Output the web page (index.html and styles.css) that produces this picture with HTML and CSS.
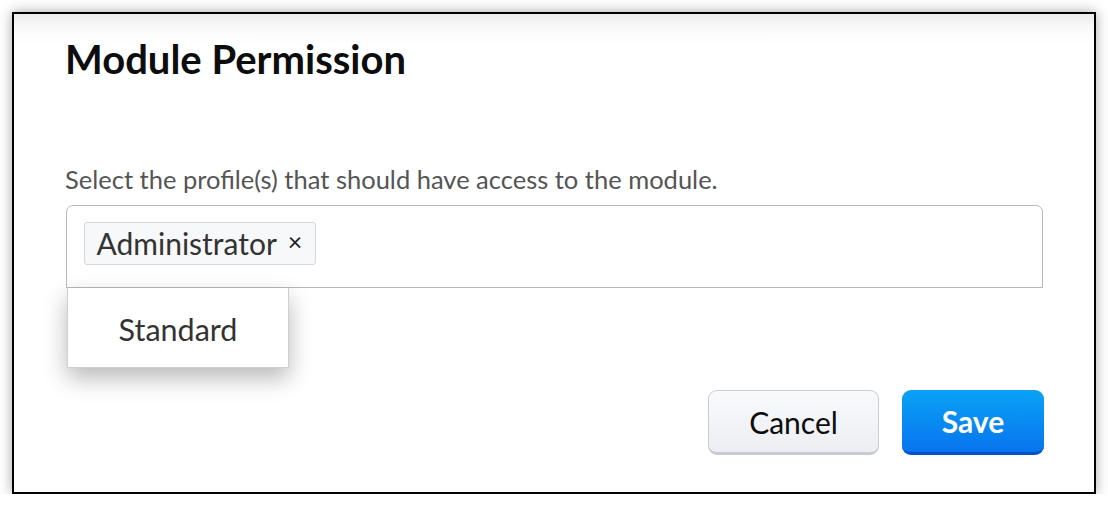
FILE: index.html
```html
<!DOCTYPE html>
<html>
<head>
<meta charset="utf-8">
<link rel="stylesheet" href="styles.css">
</head>
<body>
<div class="frame">
  <h1 class="title">Module Permission</h1>
  <p class="label">Select the profile(s) that should have access to the module.</p>
  <div class="field">
    <div class="input">
      <span class="tag">Administrator<span class="tag-x">×</span></span>
    </div>
    <div class="dropdown">
      <div class="option">Standard</div>
    </div>
  </div>
  <div class="actions">
    <button class="btn btn-cancel">Cancel</button>
    <button class="btn btn-save">Save</button>
  </div>
</div>
</body>
</html>
```

FILE: styles.css
```css
html, body {
  margin: 0;
  padding: 0;
  background: #fff;
}
body {
  padding: 12px 0 0 12px;
  font-family: Lato, "Liberation Sans", sans-serif;
}
.frame {
  box-sizing: border-box;
  width: 1084px;
  height: 482px;
  border: 2px solid #000;
  background: linear-gradient(#ececec 0px, #fafafa 14px, #fff 30px);
  box-shadow: 0 0 12px rgba(0,0,0,0.35);
  padding: 0 51px 0 52px;
  display: flex;
  flex-direction: column;
}
.title {
  margin: 21px 0 0 -1px;
  font-size: 40px;
  font-weight: 700;
  line-height: 48px;
  color: #0d0d0d;
}
.label {
  margin: 81px 0 0 -1px;
  font-size: 25.5px;
  line-height: 30px;
  color: #555;
}
.field {
  position: relative;
  margin-top: 11px;
}
.input {
  box-sizing: border-box;
  height: 83px;
  border: 1.5px solid #b8b9c0;
  border-radius: 7px 7px 0 0;
  padding: 15.5px 0 0 16.5px;
  background: #fff;
}
.tag {
  display: inline-flex;
  align-items: center;
  box-sizing: border-box;
  height: 43px;
  padding: 0 13px 0 12px;
  border: 1px solid #d6d7db;
  border-radius: 3px;
  background: #f7f8fa;
  font-size: 30px;
  line-height: 41px;
  color: #333;
}
.tag-x {
  font-size: 25px;
  margin-left: 11px;
  position: relative;
  top: -2px;
  color: #222;
}
.dropdown {
  position: absolute;
  left: 1px;
  top: 83px;
  box-sizing: border-box;
  width: 222px;
  height: 80px;
  background: #fff;
  border: 1px solid #cfcfd3;
  border-top: none;
  box-shadow: 0 10px 22px rgba(0,0,0,0.28);
  display: flex;
  align-items: center;
  justify-content: center;
}
.option {
  font-size: 30.5px;
  color: #333;
  padding-top: 2px;
}
.actions {
  display: flex;
  justify-content: flex-end;
  gap: 23px;
  margin-top: 102px;
  margin-right: -1px;
}
.btn {
  box-sizing: border-box;
  height: 65px;
  border-radius: 9px;
  font-family: Lato, "Liberation Sans", sans-serif;
  font-size: 30px;
  cursor: pointer;
}
.btn-cancel {
  width: 171px;
  background: linear-gradient(#f9fafc, #eceef3);
  border: 1.5px solid #c9cbd4;
  border-bottom-width: 3px;
  color: #0d0d0d;
}
.btn-save {
  width: 142px;
  background: linear-gradient(#0aa2f6, #0874ee);
  border: none;
  border-bottom: 3px solid #0052c8;
  color: #fff;
  font-weight: 700;
}
```
